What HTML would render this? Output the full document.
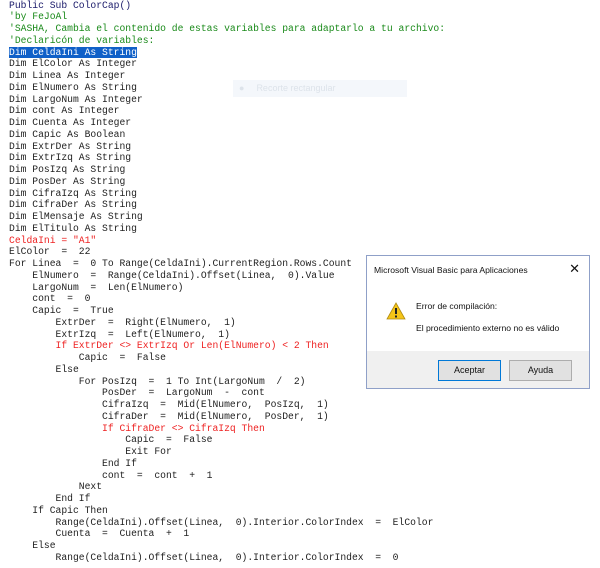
<!DOCTYPE html>
<html><head><meta charset="utf-8"><style>
html,body{margin:0;padding:0;width:600px;height:568px;overflow:hidden;background:#fff}
.code{position:absolute;left:9px;top:-0.5px;font-family:"Liberation Mono","DejaVu Sans Mono",monospace;font-size:9.7px;color:#1e1e1e}
.code div{white-space:pre;height:11.75px;line-height:11.75px;overflow:visible}
.c{color:#1a8a1a}.r{color:#ee2222}.k{color:#1a1a6a}
.sel{background:#1060c8;color:#fff}
.rec{position:absolute;left:233px;top:80px;width:174px;height:17px;background:#f4f7fb;font-family:"Liberation Sans",sans-serif;font-size:9px;color:#dde3ea;line-height:17px}
.dlg{position:absolute;left:366px;top:255px;width:222px;height:132px;border:1px solid #8fa0c8;background:#fff;font-family:"Liberation Sans",sans-serif;font-size:8.6px;color:#111}
.ft{position:absolute;left:0;right:0;bottom:0;height:37px;background:#f0f0f0}
.btn{position:absolute;top:104px;width:61px;height:19px;border:1px solid #adadad;background:#e1e1e1;text-align:center;line-height:19px;font-size:9px}
</style></head><body>
<div class="code">
<div><span class="k">Public Sub ColorCap()</span></div>
<div><span class="c">'by FeJoAl</span></div>
<div><span class="c">'SASHA, Cambia el contenido de estas variables para adaptarlo a tu archivo:</span></div>
<div><span class="c">'Declaricón de variables:</span></div>
<div><span class="sel">Dim CeldaIni As String</span></div>
<div>Dim ElColor As Integer</div>
<div>Dim Linea As Integer</div>
<div>Dim ElNumero As String</div>
<div>Dim LargoNum As Integer</div>
<div>Dim cont As Integer</div>
<div>Dim Cuenta As Integer</div>
<div>Dim Capic As Boolean</div>
<div>Dim ExtrDer As String</div>
<div>Dim ExtrIzq As String</div>
<div>Dim PosIzq As String</div>
<div>Dim PosDer As String</div>
<div>Dim CifraIzq As String</div>
<div>Dim CifraDer As String</div>
<div>Dim ElMensaje As String</div>
<div>Dim ElTitulo As String</div>
<div><span class="r">CeldaIni = "A1"</span></div>
<div>ElColor  =  22</div>
<div>For Linea  =  0 To Range(CeldaIni).CurrentRegion.Rows.Count</div>
<div>    ElNumero  =  Range(CeldaIni).Offset(Linea,  0).Value</div>
<div>    LargoNum  =  Len(ElNumero)</div>
<div>    cont  =  0</div>
<div>    Capic  =  True</div>
<div>        ExtrDer  =  Right(ElNumero,  1)</div>
<div>        ExtrIzq  =  Left(ElNumero,  1)</div>
<div><span class="r">        If ExtrDer &lt;&gt; ExtrIzq Or Len(ElNumero) &lt; 2 Then</span></div>
<div>            Capic  =  False</div>
<div>        Else</div>
<div>            For PosIzq  =  1 To Int(LargoNum  /  2)</div>
<div>                PosDer  =  LargoNum  -  cont</div>
<div>                CifraIzq  =  Mid(ElNumero,  PosIzq,  1)</div>
<div>                CifraDer  =  Mid(ElNumero,  PosDer,  1)</div>
<div><span class="r">                If CifraDer &lt;&gt; CifraIzq Then</span></div>
<div>                    Capic  =  False</div>
<div>                    Exit For</div>
<div>                End If</div>
<div>                cont  =  cont  +  1</div>
<div>            Next</div>
<div>        End If</div>
<div>    If Capic Then</div>
<div>        Range(CeldaIni).Offset(Linea,  0).Interior.ColorIndex  =  ElColor</div>
<div>        Cuenta  =  Cuenta  +  1</div>
<div>    Else</div>
<div>        Range(CeldaIni).Offset(Linea,  0).Interior.ColorIndex  =  0</div>
</div>
<div class="rec"><span style="margin-left:6px">●</span><span style="margin-left:12px">Recorte rectangular</span></div>
<div class="dlg">
<div style="position:absolute;left:7px;top:9px">Microsoft Visual Basic para Aplicaciones</div>
<div style="position:absolute;right:9px;top:5px;font-size:13px">✕</div>
<svg style="position:absolute;left:19px;top:46px" width="20" height="18" viewBox="0 0 20 18"><path d="M10 1 L19 17 L1 17 Z" fill="#f5c518" stroke="#b08a10" stroke-width="0.8"/><rect x="9" y="6" width="2" height="6" fill="#222"/><rect x="9" y="13.5" width="2" height="2" fill="#222"/></svg>
<div style="position:absolute;left:49px;top:45px">Error de compilación:</div>
<div style="position:absolute;left:49px;top:67px">El procedimiento externo no es válido</div>
<div class="ft"></div>
<div class="btn" style="left:71px;border-color:#0078d7">Aceptar</div>
<div class="btn" style="left:142px">Ayuda</div>
</div>
</body></html>
